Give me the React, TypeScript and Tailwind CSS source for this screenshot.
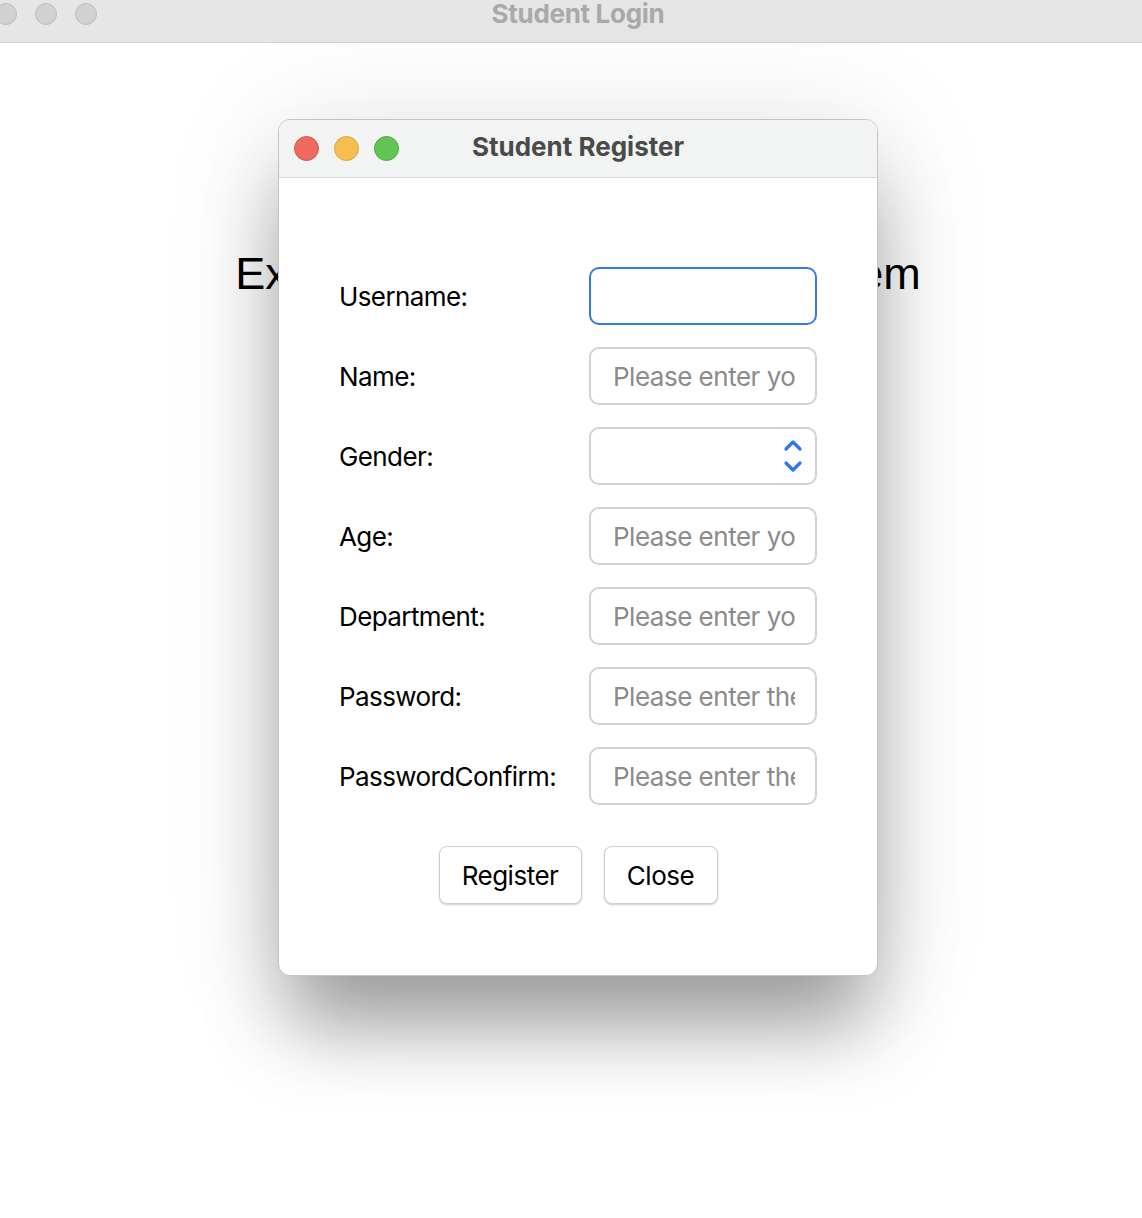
import React from 'react';

const fields = [
  { label: 'Username:', placeholder: '', focused: true },
  { label: 'Name:', placeholder: 'Please enter your name' },
  { label: 'Gender:', select: true },
  { label: 'Age:', placeholder: 'Please enter your age' },
  { label: 'Department:', placeholder: 'Please enter your department' },
  { label: 'Password:', placeholder: 'Please enter the password' },
  { label: 'PasswordConfirm:', placeholder: 'Please enter the password again' },
];

const font = { fontFamily: 'Inter, "Liberation Sans", sans-serif' };

const Field: React.FC<{ f: (typeof fields)[number] }> = ({ f }) => {
  if (f.select) {
    return (
      <div className="relative w-[228px] h-[58px] rounded-[10px] border-2 border-[#d2d2d4] bg-white">
        <svg className="absolute right-[12px] top-[8px]" width="20" height="38" viewBox="0 0 20 38">
          <path d="M3 12 L10 5 L17 12" fill="none" stroke="#2f74f0" strokeWidth="3.2" strokeLinecap="round" strokeLinejoin="round" />
          <path d="M3 26 L10 33 L17 26" fill="none" stroke="#2f74f0" strokeWidth="3.2" strokeLinecap="round" strokeLinejoin="round" />
        </svg>
      </div>
    );
  }
  return (
    <input
      readOnly
      placeholder={f.placeholder}
      className={`w-[228px] h-[58px] rounded-[10px] border-2 bg-white pl-[22px] pr-[20px] text-[26px] tracking-[-0.5px] outline-none placeholder:text-[#8b8b8b] ${
        f.focused ? 'border-[#3479f1]' : 'border-[#d2d2d4]'
      }`}
      style={font}
    />
  );
};

export default function App() {
  return (
    <div className="relative w-[1142px] h-[1218px] overflow-hidden bg-white" style={font}>
      {/* background window */}
      <div className="relative h-[43px] bg-[#e6e6e6] border-b border-[#d4d4d4]">
        <div className="absolute left-[-5px] top-[3px] flex gap-[18px]">
          <span className="w-[22px] h-[22px] rounded-full bg-[#d1d1d1] border border-[#bcbcbc]" />
          <span className="w-[22px] h-[22px] rounded-full bg-[#d1d1d1] border border-[#bcbcbc]" />
          <span className="w-[22px] h-[22px] rounded-full bg-[#d1d1d1] border border-[#bcbcbc]" />
        </div>
        <div className="absolute left-[378px] w-[400px] top-[-6px] text-center text-[26px] font-bold tracking-[-0.3px] text-[#a9a9a9]">
          Student Login
        </div>
      </div>
      <div className="ml-[78px] w-[1000px] mt-[203px] text-center text-[45px] leading-[56px] text-black" style={{ fontFamily: '"Liberation Sans", Arial, sans-serif' }}>
        Examination Management System
      </div>

      {/* dialog */}
      <div className="absolute left-[278px] top-[119px] w-[600px] h-[857px] rounded-[12px] border border-[#c4c4c4] bg-white shadow-[0_60px_80px_-10px_rgba(0,0,0,0.35),0_10px_120px_rgba(0,0,0,0.12)] overflow-hidden">
        <div className="relative h-[58px] bg-[#f2f3f3] border-b border-[#d9d9d9] flex items-center">
          <div className="flex gap-[15px] pl-[15px]">
            <span className="w-[25px] h-[25px] rounded-full bg-[#ee6a5f] border border-[#d9574c]" />
            <span className="w-[25px] h-[25px] rounded-full bg-[#f5be4f] border border-[#dea63a]" />
            <span className="w-[25px] h-[25px] rounded-full bg-[#61c454] border border-[#4eaa42]" />
          </div>
          <div className="absolute inset-x-0 top-[11px] text-center text-[26px] font-bold text-[#4a4a4a] leading-[32px]">
            Student Register
          </div>
        </div>

        <div className="pt-[89px] pl-[60px] flex flex-col gap-[22px]">
          {fields.map((f) => (
            <div key={f.label} className="flex items-center">
              <div className="w-[250px] text-[26px] tracking-[-0.6px] text-black">{f.label}</div>
              <Field f={f} />
            </div>
          ))}
        </div>

        <div className="mt-[41px] flex justify-center gap-[22px]">
          <button className="w-[143px] h-[58px] rounded-[8px] border border-[#cfcfd1] bg-white text-[26px] tracking-[-0.5px] text-black shadow-[0_1px_2px_rgba(0,0,0,0.2)]">
            Register
          </button>
          <button className="w-[114px] h-[58px] rounded-[8px] border border-[#cfcfd1] bg-white text-[26px] tracking-[-0.5px] text-black shadow-[0_1px_2px_rgba(0,0,0,0.2)]">
            Close
          </button>
        </div>
      </div>
    </div>
  );
}
